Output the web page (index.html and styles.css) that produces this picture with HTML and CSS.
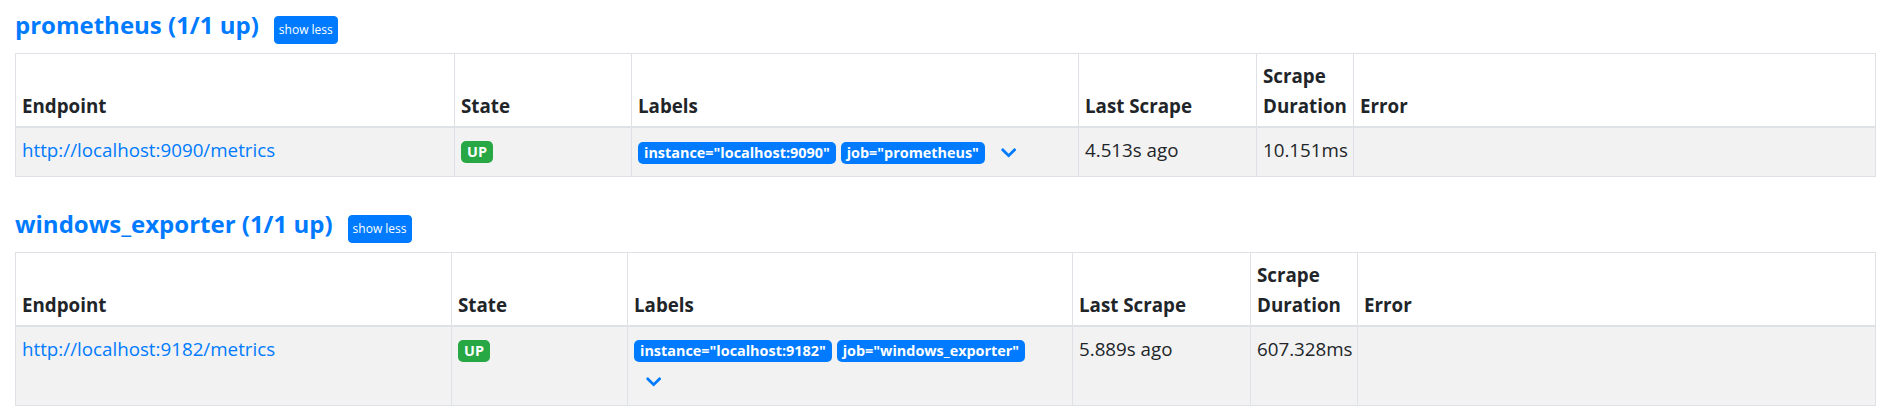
FILE: index.html
```html
<!DOCTYPE html>
<html lang="en">
<head>
<meta charset="utf-8">
<title>Targets</title>
<link rel="stylesheet" href="styles.css">
</head>
<body>
<div class="page">
  <section class="pool">
    <h3 class="pool-head"><a class="pool-title" href="#prometheus">prometheus (1/1 up)</a><button class="toggle" type="button">show less</button></h3>
    <table class="targets t-prom">
      <colgroup>
        <col class="w-endpoint"><col class="w-state"><col class="w-labels"><col class="w-last"><col class="w-dur"><col class="w-error">
      </colgroup>
      <thead>
        <tr><th>Endpoint</th><th>State</th><th>Labels</th><th>Last Scrape</th><th>Scrape Duration</th><th>Error</th></tr>
      </thead>
      <tbody>
        <tr>
          <td><a class="endpoint" href="http://localhost:9090/metrics">http://localhost:9090/metrics</a></td>
          <td><span class="badge up">UP</span></td>
          <td class="labels"><span class="badge label">instance="localhost:9090"</span><span class="badge label">job="prometheus"</span><button class="more" type="button" title="show more"><svg class="chev" viewBox="0 0 448 512" aria-hidden="true"><path d="M207.029 381.476L12.686 187.132c-9.373-9.373-9.373-24.569 0-33.941l22.667-22.667c9.357-9.357 24.522-9.375 33.901-.04L224 284.505l154.745-154.021c9.379-9.335 24.544-9.317 33.901.04l22.667 22.667c9.373 9.373 9.373 24.569 0 33.941L240.971 381.476c-9.373 9.372-24.569 9.372-33.942 0z"/></svg></button></td>
          <td>4.513s ago</td>
          <td>10.151ms</td>
          <td></td>
        </tr>
      </tbody>
    </table>
  </section>
  <section class="pool">
    <h3 class="pool-head"><a class="pool-title" href="#windows_exporter">windows_exporter (1/1 up)</a><button class="toggle" type="button">show less</button></h3>
    <table class="targets t-win">
      <colgroup>
        <col class="w-endpoint"><col class="w-state"><col class="w-labels"><col class="w-last"><col class="w-dur"><col class="w-error">
      </colgroup>
      <thead>
        <tr><th>Endpoint</th><th>State</th><th>Labels</th><th>Last Scrape</th><th>Scrape Duration</th><th>Error</th></tr>
      </thead>
      <tbody>
        <tr>
          <td><a class="endpoint" href="http://localhost:9182/metrics">http://localhost:9182/metrics</a></td>
          <td><span class="badge up">UP</span></td>
          <td class="labels"><span class="badge label">instance="localhost:9182"</span><span class="badge label">job="windows_exporter"</span><button class="more" type="button" title="show more"><svg class="chev" viewBox="0 0 448 512" aria-hidden="true"><path d="M207.029 381.476L12.686 187.132c-9.373-9.373-9.373-24.569 0-33.941l22.667-22.667c9.357-9.357 24.522-9.375 33.901-.04L224 284.505l154.745-154.021c9.379-9.335 24.544-9.317 33.901.04l22.667 22.667c9.373 9.373 9.373 24.569 0 33.941L240.971 381.476c-9.373 9.372-24.569 9.372-33.942 0z"/></svg></button></td>
          <td>5.889s ago</td>
          <td>607.328ms</td>
          <td></td>
        </tr>
      </tbody>
    </table>
  </section>
</div>
</body>
</html>
```
FILE: styles.css
```css
html, body {
  margin: 0;
  padding: 0;
  background: #fff;
}

body {
  font-family: "Open Sans", "Noto Sans", sans-serif;
  font-size: 18.75px;
  line-height: 30px;
  color: #212529;
}

.page {
  padding: 0 20px 0 15px;
}

.pool-head {
  margin: 0 0 10px;
  height: 43px;
  font-size: 35px;
  line-height: 42px;
  font-weight: 500;
  white-space: nowrap;
}

.pool-title {
  font-size: 24px;
  font-weight: 700;
  color: #007bff;
  text-decoration: none;
}

.toggle {
  font-family: inherit;
  font-size: 12px;
  line-height: 18px;
  padding: 4px 4px 3.5px;
  border: 1px solid #007bff;
  border-radius: 4px;
  background: #007bff;
  color: #fff;
  margin-left: 15px;
  vertical-align: baseline;
  cursor: pointer;
}

.targets {
  width: 100%;
  table-layout: fixed;
  border-collapse: collapse;
  margin-bottom: 22px;
}

.targets th,
.targets td {
  border: 1px solid #dee2e6;
  padding: 7px 6px 5px;
  text-align: left;
}

.targets th {
  vertical-align: bottom;
  font-weight: 700;
  border-bottom-width: 2px;
}

.targets td {
  vertical-align: top;
}

.targets tbody tr {
  background: #f2f2f2;
}

.t-prom .w-endpoint { width: 439px; }
.t-prom .w-state { width: 177px; }
.t-prom .w-labels { width: 447px; }
.t-prom .w-last { width: 178px; }
.t-prom .w-dur { width: 97px; }
.t-prom .w-error { width: 522px; }

.t-win .w-endpoint { width: 436px; }
.t-win .w-state { width: 176px; }
.t-win .w-labels { width: 445px; }
.t-win .w-last { width: 178px; }
.t-win .w-dur { width: 107px; }
.t-win .w-error { width: 518px; }

.endpoint {
  color: #007bff;
  text-decoration: none;
}

.badge {
  display: inline-block;
  font-size: 14.4px;
  font-weight: 700;
  line-height: 1;
  padding: 4px 6px;
  border-radius: 5px;
  color: #fff;
  white-space: nowrap;
  vertical-align: baseline;
}

.badge.up {
  background: #28a745;
}

.badge.label {
  background: #007bff;
  margin-right: 5px;
}

.more {
  display: inline-flex;
  align-items: center;
  justify-content: center;
  vertical-align: middle;
  height: 36px;
  padding: 0 10px 0 11.5px;
  border: 0;
  background: transparent;
  color: #007bff;
  cursor: pointer;
}

.chev {
  width: 15.3px;
  height: 17.5px;
  fill: currentColor;
}
```
